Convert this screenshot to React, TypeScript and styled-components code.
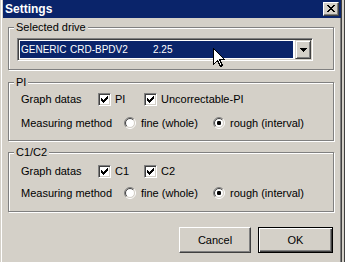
import React from "react";
import styled, { createGlobalStyle } from "styled-components";

const GlobalStyle = createGlobalStyle`
  html, body {
    margin: 0;
    padding: 0;
    background: #d4d0c8;
    overflow: hidden;
  }
  body {
    font-family: "Liberation Sans", Arial, sans-serif;
    font-size: 11px;
    color: #000;
  }
`;

// pixel glyphs (classic win32 look)
const CHECK = ["......X", ".....XX", "X...XXX", "XX.XXX.", "XXXXX..", ".XXX...", "..X...."];
const CROSS = ["XX....XX", ".XX..XX.", "..XXXX..", "...XX...", "..XXXX..", ".XX..XX.", "XX....XX"];
const ARROW = ["XXXXXXX", ".XXXXX.", "..XXX..", "...X..."];

const PixelGlyph = ({ rows, color = "#000" }: { rows: string[]; color?: string }) => {
    const rects: React.ReactNode[] = [];
    rows.forEach((row, y) => {
        let x = 0;
        while (x < row.length) {
            if (row[x] === "X") {
                let end = x;
                while (end < row.length && row[end] === "X") end++;
                rects.push(<rect key={`${x}-${y}`} x={x} y={y} width={end - x} height={1} fill={color} />);
                x = end;
            } else x++;
        }
    });
    return (
        <svg width={rows[0].length} height={rows.length} shapeRendering="crispEdges" style={{ display: "block" }}>
            {rects}
        </svg>
    );
};

const RadioGlyph = ({ checked }: { checked?: boolean }) => {
    const arc = (r: number, first: boolean) => {
        const o = r * Math.SQRT1_2;
        const a = `${6 - o},${6 + o}`;
        const b = `${6 + o},${6 - o}`;
        return first ? `M${a} A${r} ${r} 0 0 1 ${b}` : `M${b} A${r} ${r} 0 0 1 ${a}`;
    };
    return (
        <svg width="12" height="12" style={{ display: "block" }}>
            <circle cx="6" cy="6" r="4.5" fill="#fff" />
            <path d={arc(5.5, true)} stroke="#808080" fill="none" />
            <path d={arc(5.5, false)} stroke="#fff" fill="none" />
            <path d={arc(4.5, true)} stroke="#404040" fill="none" />
            <path d={arc(4.5, false)} stroke="#d4d0c8" fill="none" />
            {checked && <rect x="4" y="4" width="4" height="4" rx="1.2" fill="#000" />}
        </svg>
    );
};

const Screen = styled.div`
    display: flex;
    width: 345px;
    height: 262px;
`;

const Window = styled.div`
    position: relative;
    box-sizing: border-box;
    width: 342px;
    height: 262px;
    border-left: 1px solid #d4d0c8;
    border-right: 1px solid #404040;
    padding-left: 2px;
    background: #d4d0c8;
    box-shadow: inset 1px 0 0 #fff, inset -1px 0 0 #808080;
    display: flex;
    flex-direction: column;
`;

const Edge = styled.div`
    flex: 1;
    background: #d4d0c8;
    box-shadow: inset -1px 0 0 #404040;
`;

const TitleBar = styled.div`
    height: 18px;
    flex-shrink: 0;
    background: #0a246a;
    display: flex;
    align-items: center;
    justify-content: space-between;
    padding: 0 2px;
    color: #fff;
    font-weight: bold;
    font-size: 12px;
`;

const CloseButton = styled.div`
    box-sizing: border-box;
    width: 16px;
    height: 14px;
    background: #d4d0c8;
    border: 1px solid;
    border-color: #fff #404040 #404040 #fff;
    box-shadow: inset -1px -1px 0 #808080;
    display: flex;
    align-items: center;
    justify-content: center;
    padding-bottom: 1px;
`;

const Content = styled.div`
    display: flex;
    flex-direction: column;
    padding: 9px 7px 0 5px;
`;

interface GroupProps {
    readonly $h: number
    readonly $mt?: number
    readonly $pt: number
    readonly $pl: number
    readonly $gap?: number
}

const Group = styled.div<GroupProps>`
    position: relative;
    box-sizing: border-box;
    height: ${p => p.$h}px;
    margin-top: ${p => p.$mt || 0}px;
    border: 1px solid #808080;
    box-shadow: 1px 1px 0 #fff, inset 1px 1px 0 #fff;
    padding: ${p => p.$pt}px 0 0 ${p => p.$pl}px;
    display: flex;
    flex-direction: column;
    gap: ${p => p.$gap || 0}px;
`;

const Caption = styled.span`
    position: absolute;
    top: -7px;
    left: 5px;
    padding: 0 2px;
    line-height: 13px;
    background: #d4d0c8;
`;

const Combo = styled.div`
    position: relative;
    box-sizing: border-box;
    width: 296px;
    height: 23px;
    border: 1px solid;
    border-color: #808080 #fff #fff #808080;
    box-shadow: inset 1px 1px 0 #404040, inset -1px -1px 0 #d4d0c8;
    background: #fff;
    padding: 1px;
    display: flex;
`;

const ComboValue = styled.div`
    flex: 1;
    display: flex;
    margin: 1px 2px 1px 1px;
    background: #0a246a;
    color: #fff;
    font-size: 10px;
    line-height: 17px;
    padding-left: 1px;
    white-space: nowrap;
`;

const ValuePart = styled.span<{ $w?: number }>`
    width: ${p => (p.$w ? `${p.$w}px` : "auto")};
    flex-shrink: 0;
`;

const DropButton = styled.div`
    box-sizing: border-box;
    width: 16px;
    background: #d4d0c8;
    border: 1px solid;
    border-color: #d4d0c8 #404040 #404040 #d4d0c8;
    box-shadow: inset 1px 1px 0 #fff, inset -1px -1px 0 #808080;
    display: flex;
    align-items: center;
    justify-content: center;
`;

const Cursor = styled.svg`
    position: absolute;
    left: 212px;
    top: 48px;
`;

const Row = styled.div`
    display: flex;
    align-items: center;
    height: 16px;
    line-height: 16px;
    white-space: nowrap;
`;

const RowLabel = styled.span<{ $w: number }>`
    width: ${p => p.$w}px;
    flex-shrink: 0;
`;

const Option = styled.label<{ $w?: number; $gap: number }>`
    display: flex;
    align-items: center;
    gap: ${p => p.$gap}px;
    width: ${p => (p.$w ? `${p.$w}px` : "auto")};
    flex-shrink: 0;
`;

const CheckBox = styled.span`
    box-sizing: border-box;
    width: 13px;
    height: 13px;
    border: 1px solid;
    border-color: #808080 #fff #fff #808080;
    box-shadow: inset 1px 1px 0 #404040, inset -1px -1px 0 #d4d0c8;
    background: #fff;
    display: flex;
    align-items: center;
    justify-content: center;
`;

const ButtonRow = styled.div`
    display: flex;
    justify-content: flex-end;
    gap: 7px;
    margin-top: 15px;
    padding-right: 1px;
`;

const Button = styled.div<{ $w: number; $primary?: boolean }>`
    box-sizing: border-box;
    width: ${p => p.$w}px;
    height: 26px;
    background: #d4d0c8;
    display: flex;
    align-items: center;
    justify-content: center;
    border: 1px solid;
    border-color: ${p => (p.$primary ? "#000" : "#fff #404040 #404040 #fff")};
    box-shadow: ${p =>
        p.$primary
            ? "inset 1px 1px 0 #fff, inset -1px -1px 0 #404040, inset -2px -2px 0 #808080"
            : "inset -1px -1px 0 #808080"};
`;

const Check = ({ text, w }: { text: string; w?: number }) => (
    <Option $w={w} $gap={4}>
        <CheckBox>
            <PixelGlyph rows={CHECK} />
        </CheckBox>
        <span>{text}</span>
    </Option>
);

const Radio = ({ text, w, checked }: { text: string; w?: number; checked?: boolean }) => (
    <Option $w={w} $gap={5}>
        <RadioGlyph checked={checked} />
        <span>{text}</span>
    </Option>
);

const MeasureGroup = ({ title, checks, h, mt, pt, gap }: {
    title: string; checks: string[]; h: number; mt: number; pt: number; gap: number
}) => (
    <Group $h={h} $mt={mt} $pt={pt} $pl={12} $gap={gap}>
        <Caption>{title}</Caption>
        <Row>
            <RowLabel $w={77}>Graph datas</RowLabel>
            <Check text={checks[0]} w={46} />
            <Check text={checks[1]} />
        </Row>
        <Row>
            <RowLabel $w={103}>Measuring method</RowLabel>
            <Radio text="fine (whole)" w={89} />
            <Radio text="rough (interval)" checked />
        </Row>
    </Group>
);

export default function App() {
    return (
        <Screen>
            <GlobalStyle />
            <Window>
                <TitleBar>
                    <span>Settings</span>
                    <CloseButton>
                        <PixelGlyph rows={CROSS} />
                    </CloseButton>
                </TitleBar>
                <Content>
                    <Group $h={43} $pt={10} $pl={8}>
                        <Caption>Selected drive</Caption>
                        <Combo>
                            <ComboValue>
                                <ValuePart $w={49}>GENERIC</ValuePart>
                                <ValuePart $w={83}>CRD-BPDV2</ValuePart>
                                <ValuePart>2.25</ValuePart>
                            </ComboValue>
                            <DropButton>
                                <PixelGlyph rows={ARROW} />
                            </DropButton>
                        </Combo>
                    </Group>
                    <MeasureGroup title="PI" checks={["PI", "Uncorrectable-PI"]} h={59} mt={12} pt={8} gap={8} />
                    <MeasureGroup title="C1/C2" checks={["C1", "C2"]} h={60} mt={11} pt={10} gap={6} />
                    <ButtonRow>
                        <Button $w={72}>Cancel</Button>
                        <Button $w={75} $primary>OK</Button>
                    </ButtonRow>
                </Content>
                <Cursor width="13" height="20" shapeRendering="crispEdges">
                    <polygon
                        points="0.5,0.5 0.5,16.5 4.5,12.5 7.5,18.5 9.5,17.5 6.5,11.5 11.5,11.5"
                        fill="#fff"
                        stroke="#000"
                        strokeWidth="1"
                    />
                </Cursor>
            </Window>
            <Edge />
        </Screen>
    );
}
